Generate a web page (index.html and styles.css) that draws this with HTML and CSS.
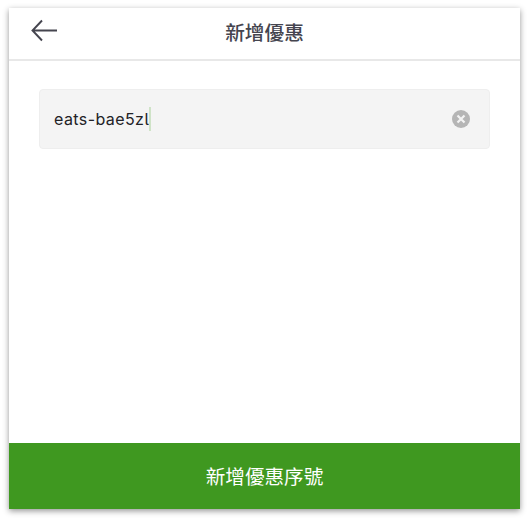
FILE: index.html
```html
<!DOCTYPE html>
<html lang="zh-Hant">
<head>
<meta charset="utf-8">
<title>新增優惠</title>
<link rel="stylesheet" href="styles.css">
</head>
<body>
<main class="screen">
  <header class="topbar">
    <button class="back" aria-label="返回">
      <svg width="28" height="24" viewBox="0 0 28 24"><path d="M26 11.5H1.5M11 1.5L1.5 11.5L11 21.5" fill="none" stroke="#45454f" stroke-width="1.9"/></svg>
    </button>
    <h1 class="title">新增優惠</h1>
  </header>
  <section class="content">
    <div class="field">
      <span class="value">eats-bae5zl</span><span class="caret"></span>
      <svg class="clear" width="18" height="18" viewBox="0 0 18 18"><circle cx="9" cy="9" r="9" fill="#b5b5b5"/><path d="M5.5 5.5L12.5 12.5M12.5 5.5L5.5 12.5" stroke="#f3f3f3" stroke-width="2.2"/></svg>
    </div>
  </section>
  <button class="submit">新增優惠序號</button>
</main>
</body>
</html>
```
FILE: styles.css
```css
* { box-sizing: border-box; }
html, body { height: 100%; }
body {
  margin: 0;
  padding: 8px 10px 12px 9px;
  background: #fff;
  font-family: "Inter", "Noto Sans CJK TC", sans-serif;
}
.screen {
  height: 501px;
  display: flex;
  flex-direction: column;
  background: #fff;
  box-shadow: 0 2px 6px rgba(0, 0, 0, .42);
}
.topbar {
  position: relative;
  height: 53px;
  flex: none;
  display: flex;
  align-items: center;
  justify-content: center;
  border-bottom: 2px solid #e8e8e8;
}
.back {
  position: absolute;
  left: 22px;
  top: 11px;
  padding: 0;
  border: 0;
  background: none;
  display: flex;
}
.title {
  margin: 0 0 4px;
  font: 500 19.7px/26px "Noto Sans CJK TC", sans-serif;
  color: #45454f;
}
.content {
  flex: 1;
  padding: 29px 30px 0;
}
.field {
  height: 60px;
  margin-top: -1px;
  display: flex;
  align-items: center;
  padding: 0 19px 0 14px;
  background: #f4f4f4;
  border: 1px solid #eeeeee;
  border-radius: 4px;
}
.value {
  font: 16px/20px "Inter", sans-serif;
  font-feature-settings: "cv05";
  letter-spacing: .42px;
  color: #222226;
  margin-bottom: 1px;
}
.caret {
  width: 2px;
  height: 24px;
  margin-bottom: 1px;
  background: #cfe3c7;
}
.clear { margin-left: auto; }
.submit {
  height: 66px;
  flex: none;
  border: 0;
  background: #3f9820;
  color: #fff;
  font: 400 19.6px/26px "Noto Sans CJK TC", sans-serif;
}
```
